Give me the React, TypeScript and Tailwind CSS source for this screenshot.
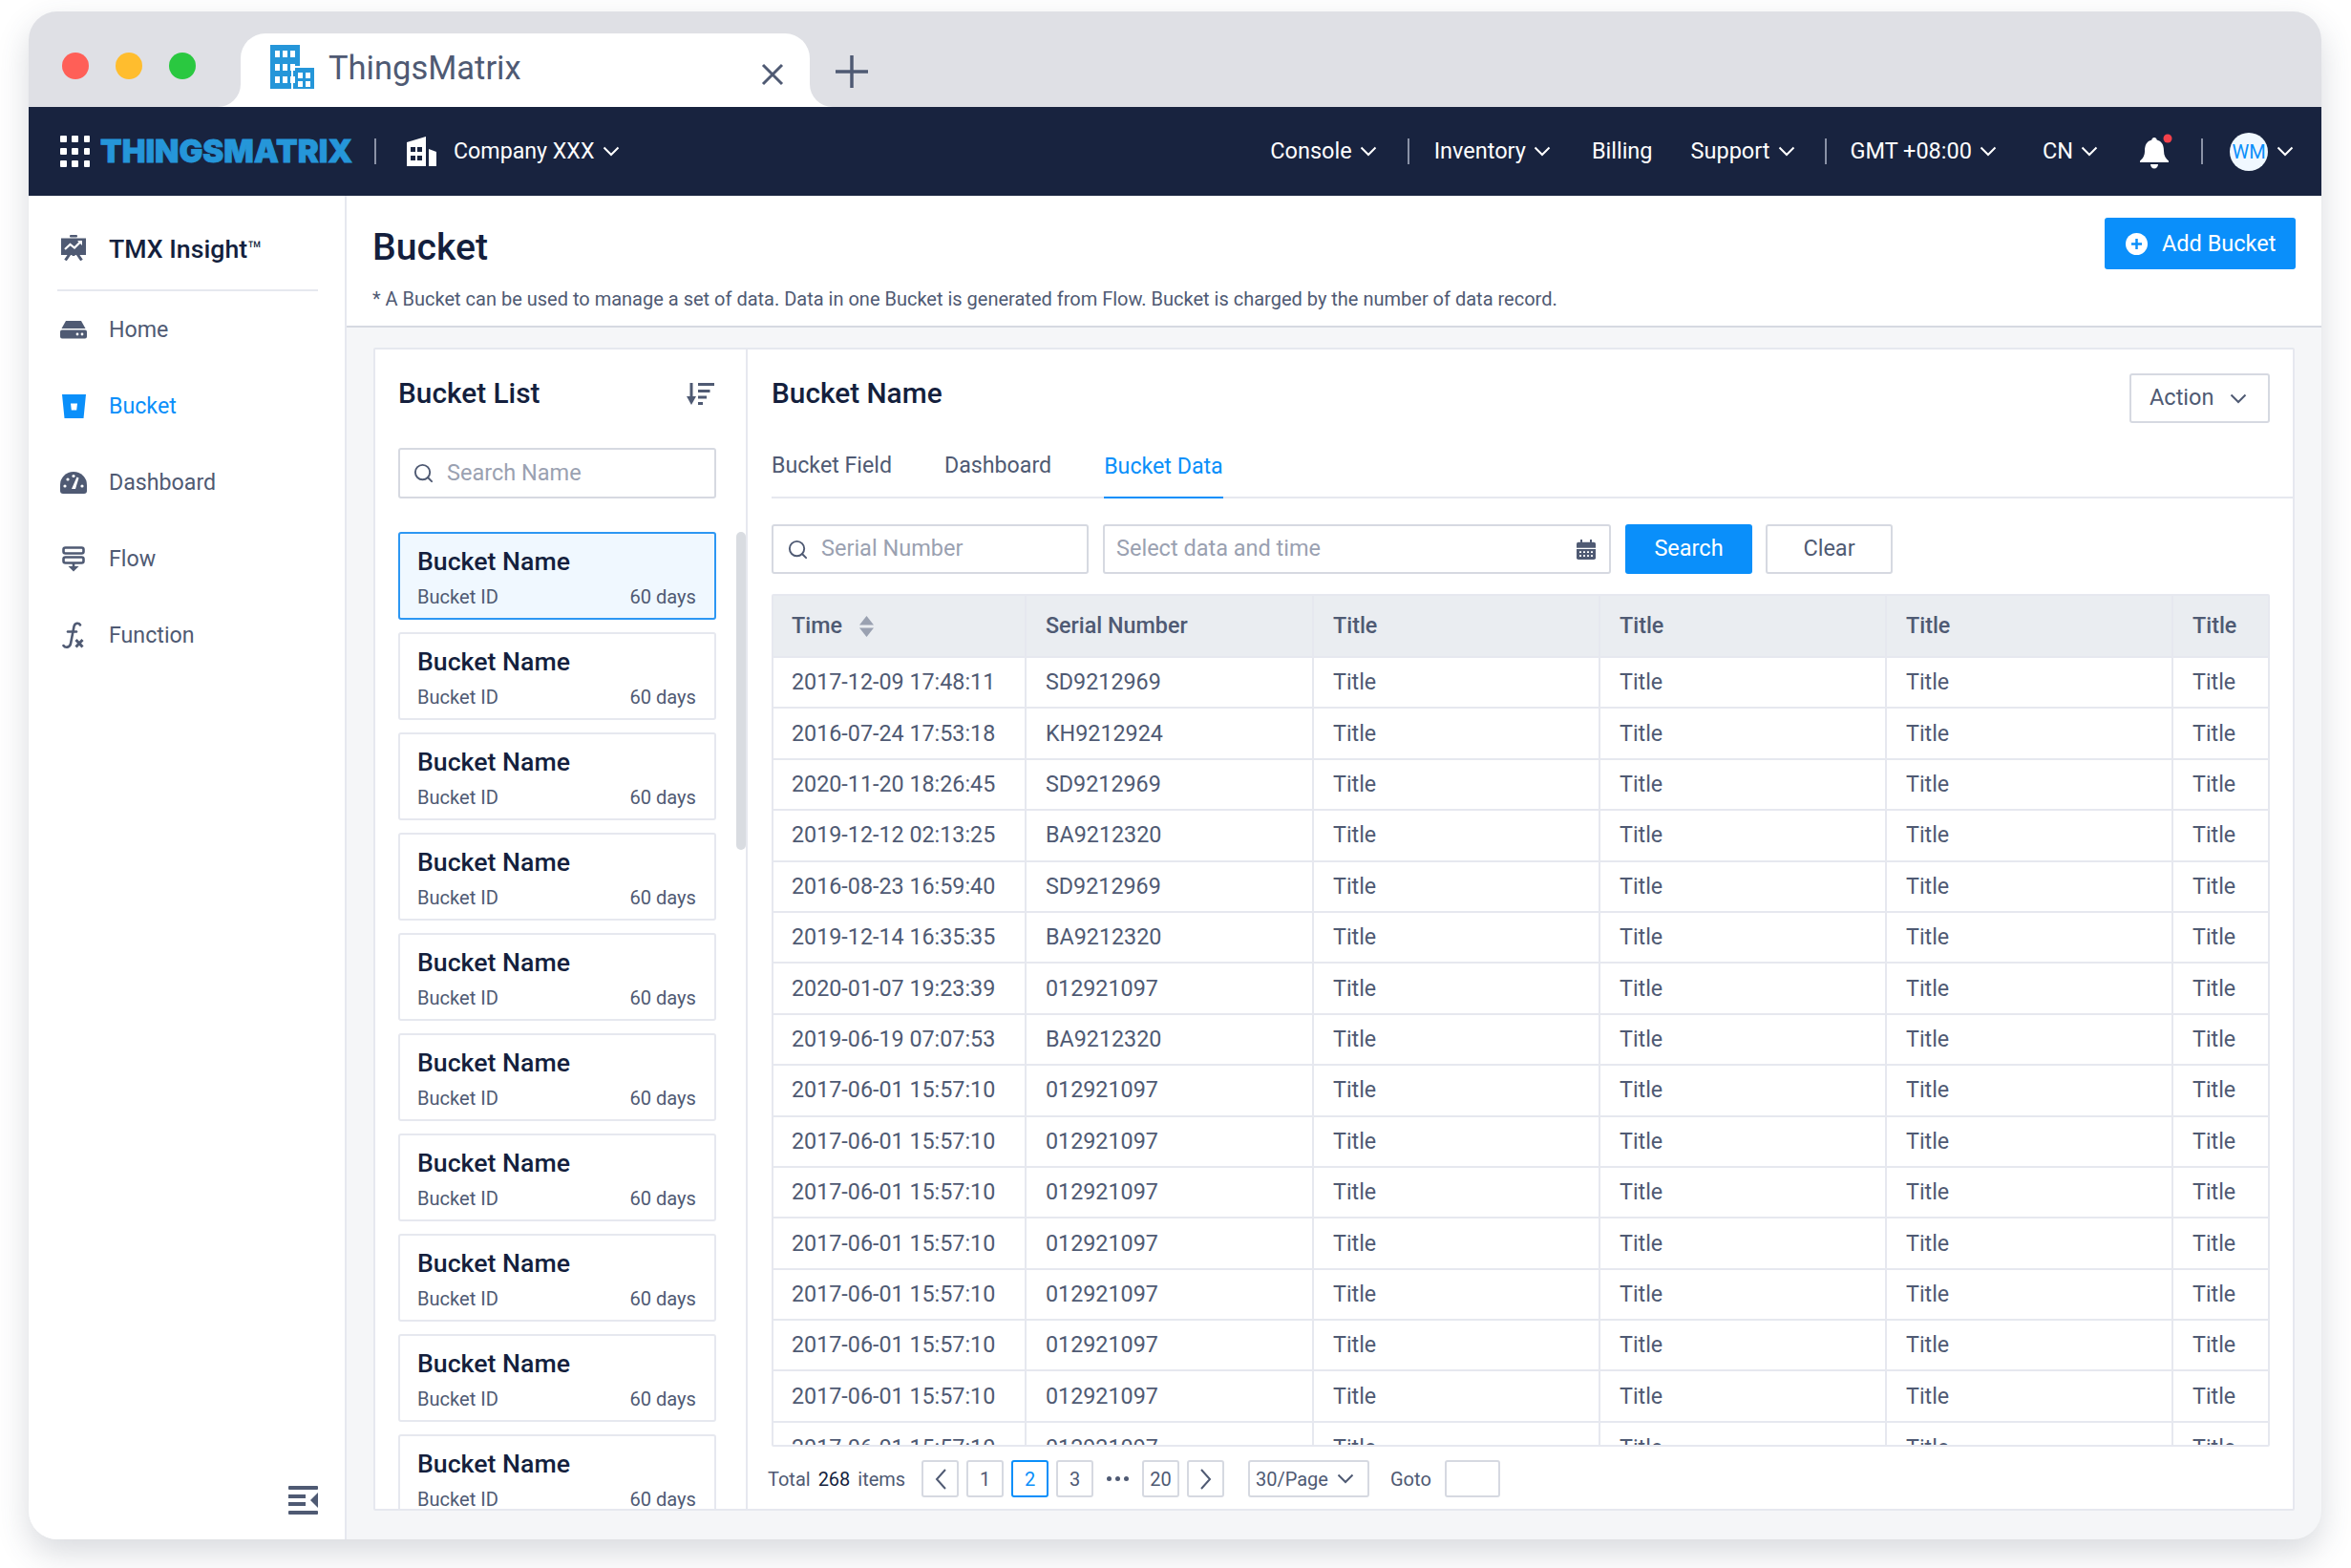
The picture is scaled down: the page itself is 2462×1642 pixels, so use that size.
import React from "react";
import { Search } from "lucide-react";

const Chev = ({ className = "text-white", w = 18 }: { className?: string; w?: number }) => (
  <svg width={w} height={(w * 11) / 18} viewBox="0 0 18 11" fill="none" className={className + " shrink-0"}>
    <path d="M1.5 1.5 9 9l7.5-7.5" stroke="currentColor" strokeWidth="2" />
  </svg>
);

const Divider = () => <div className="w-[2px] h-[27px] bg-[#8a92a6] shrink-0" />;

const Favicon = () => (
  <svg width="46" height="46" viewBox="0 0 46 46" className="shrink-0">
    <rect x="0" y="0" width="31" height="46" fill="#2596d9" />
    <rect x="22" y="22" width="24" height="24" fill="#fff" />
    <rect x="24" y="24" width="22" height="22" fill="#2596d9" />
    {[5, 13, 21].map((x) => [6, 20, 33].map((y) => <rect key={x + "-" + y} x={x} y={y} width="5" height="7" fill="#fff" />))}
    {[29, 37].map((x) => [29, 38].map((y) => <rect key={x + "-" + y} x={x} y={y} width="5" height="6" fill="#fff" />))}
  </svg>
);

const Grid = () => (
  <div className="grid grid-cols-3 gap-x-[6px] gap-y-[6px] w-[31px] shrink-0">
    {Array.from({ length: 9 }).map((_, i) => (
      <div key={i} className="w-[6.5px] h-[7px] bg-white rounded-[1px]" />
    ))}
  </div>
);

const CompanyIcon = () => (
  <svg width="31" height="31" viewBox="0 0 31 31" className="shrink-0" fill="#fff">
    <path d="M0 6 20 0v31H0z" />
    <path d="M23 13l8 3v15h-8z" />
    <g fill="#18233f">
      <rect x="4" y="11" width="5" height="5" />
      <rect x="11" y="11" width="5" height="5" />
      <rect x="4" y="20" width="5" height="5" />
      <rect x="11" y="20" width="5" height="5" />
    </g>
  </svg>
);

const Bell = () => (
  <svg width="36" height="38" viewBox="0 0 36 38" className="shrink-0">
    <path d="M16 4c1.5 0 2.5 1 2.7 2.5C24 8 26 12 26 18c0 5 2 8 5 10.5V30H1v-1.500C4 26 6 23 6 18c0-6 2-10 7.300-11.500C13.500 5 14.500 4 16 4z" fill="#fff" />
    <path d="M12 32h8c0 2.500-1.800 4.500-4 4.500S12 34.500 12 32z" fill="#fff" />
    <circle cx="30" cy="5" r="4.500" fill="#f5414b" />
  </svg>
);

const InsightIcon = () => (
  <svg width="26" height="27" viewBox="0 0 26 27" fill="#4f5a73">
    <rect x="9" y="0" width="8" height="2.500" rx="1" />
    <path d="M0 3.500h26v17.500H0z" />
    <path d="M4 15l5.500-5 4.500 3.500 7-7" stroke="#fff" strokeWidth="2.200" fill="none" />
    <path d="M17 6h5v5z" fill="#fff" />
    <path d="M9 20l-4.500 6.500M17 20l4.500 6.500" stroke="#4f5a73" strokeWidth="3" />
    <path d="M13 19v3" stroke="#4f5a73" strokeWidth="3" />
  </svg>
);

const HomeIcon = () => (
  <svg width="28" height="19" viewBox="0 0 28 19" fill="#4f5a73">
    <path d="M6 0h16l4.500 8H1.500z" />
    <path d="M2 9.500h24a2 2 0 0 1 2 2V16.500a2 2 0 0 1-2 2H2a2 2 0 0 1-2-2V11.500a2 2 0 0 1 2-2z" />
    <circle cx="18" cy="14" r="1.400" fill="#fff" />
    <circle cx="23" cy="14" r="1.400" fill="#fff" />
  </svg>
);

const BucketIcon = () => (
  <svg width="25" height="25" viewBox="0 0 25 25" fill="#0a8ffa">
    <path fillRule="evenodd" d="M0 0h25l-2.500 25H2.500zM9 9.500h7l-.8 7H9.800z" />
  </svg>
);

const GaugeIcon = () => (
  <svg width="28" height="23" viewBox="0 0 28 23">
    <path d="M14 0a14 14 0 0 1 14 14v6a3 3 0 0 1-3 3H3a3 3 0 0 1-3-3v-6A14 14 0 0 1 14 0z" fill="#4f5a73" />
    <g fill="#fff">
      <circle cx="5" cy="15" r="1.600" />
      <circle cx="8" cy="8" r="1.600" />
      <circle cx="14" cy="4.500" r="1.600" />
      <circle cx="23" cy="15" r="1.600" />
      <path d="M17.500 5.500 19.500 6.500 16 18h-4z" />
    </g>
  </svg>
);

const FlowIcon = () => (
  <svg width="24" height="27" viewBox="0 0 24 27" fill="none" stroke="#4f5a73" strokeWidth="2.600">
    <rect x="1.500" y="1.500" width="21" height="6" rx="2" />
    <rect x="1.500" y="11.500" width="21" height="6" rx="2" />
    <path d="M12 17.500v4" />
    <path d="M6.500 21h11L12 26.500z" fill="#4f5a73" stroke="none" />
  </svg>
);

const FuncIcon = () => (
  <svg width="24" height="29" viewBox="0 0 24 29" fill="none" stroke="#4f5a73" strokeWidth="2.600" strokeLinecap="round">
    <path d="M19 3.500C17.500 1 13.500 1 12.500 5L9 23c-.8 4-5.500 5-7.500 2" />
    <path d="M6 10.500h9" />
    <path d="M14.500 19l7 7.500M21.500 19l-7 7.500" strokeWidth="3" strokeLinecap="butt" />
  </svg>
);

const CollapseIcon = () => (
  <svg width="31" height="30" viewBox="0 0 31 30" fill="#4f5a73">
    <rect x="0" y="0" width="31" height="4" rx="1" />
    <rect x="0" y="9" width="18" height="4" />
    <rect x="0" y="17" width="18" height="4" />
    <rect x="0" y="26" width="31" height="4" rx="1" />
    <path d="M31 7v16l-8-8z" />
  </svg>
);

const SortIcon = () => (
  <svg width="29" height="23" viewBox="0 0 29 23" fill="#4f5a73">
    <rect x="3.500" y="0" width="3" height="16" />
    <path d="M0 14h10l-5 9z" />
    <rect x="12" y="0" width="17" height="3" />
    <rect x="12" y="7" width="12.500" height="3" />
    <rect x="12" y="13.500" width="9" height="3" />
    <rect x="12" y="20" width="5" height="3" />
  </svg>
);

const CalendarIcon = () => (
  <svg width="20" height="21" viewBox="0 0 20 24" preserveAspectRatio="none" fill="#4f5a73" className="shrink-0">
    <rect x="4" y="0" width="2" height="5" />
    <rect x="14" y="0" width="2" height="5" />
    <path d="M2 3h16a2 2 0 0 1 2 2v5H0V5a2 2 0 0 1 2-2z" />
    <path d="M0 11.500h20V22a2 2 0 0 1-2 2H2a2 2 0 0 1-2-2z" />
    <g fill="#fff">
      {[4, 8, 12, 16].map((x) => <rect key={x} x={x - 1} y="14" width="2" height="2" />)}
      {[4, 8, 12, 16].map((x) => <rect key={"b" + x} x={x - 1} y="18.500" width="2" height="2" />)}
    </g>
  </svg>
);

const NavItem = ({ icon, label, active }: { icon: React.ReactNode; label: string; active?: boolean }) => (
  <div className="h-[80px] flex items-center pl-[33px]">
    <div className="w-[28px] flex justify-center shrink-0">{icon}</div>
    <span className={"ml-[23px] text-[23.2px] " + (active ? "text-[#0a8ffa]" : "text-[#4f5a73]")}>{label}</span>
  </div>
);

const Card = ({ active }: { active?: boolean }) => (
  <div
    className={
      "h-[92px] shrink-0 rounded-[3px] border-2 pl-[18px] pr-[19px] pt-[11px] " +
      (active ? "border-[#2d97f3] bg-[#f0f8ff]" : "border-[#e6e8ef] bg-white")
    }
  >
    <div className="text-[26.7px] font-medium leading-[36px] text-[#141f3d]">Bucket Name</div>
    <div className="flex justify-between text-[20.1px] leading-[28px] mt-[5px] text-[#4f5a73]">
      <span>Bucket ID</span>
      <span>60 days</span>
    </div>
  </div>
);

const rows: [string, string][] = [
  ["2017-12-09 17:48:11", "SD9212969"],
  ["2016-07-24 17:53:18", "KH9212924"],
  ["2020-11-20 18:26:45", "SD9212969"],
  ["2019-12-12 02:13:25", "BA9212320"],
  ["2016-08-23 16:59:40", "SD9212969"],
  ["2019-12-14 16:35:35", "BA9212320"],
  ["2020-01-07 19:23:39", "012921097"],
  ["2019-06-19 07:07:53", "BA9212320"],
  ["2017-06-01 15:57:10", "012921097"],
  ["2017-06-01 15:57:10", "012921097"],
  ["2017-06-01 15:57:10", "012921097"],
  ["2017-06-01 15:57:10", "012921097"],
  ["2017-06-01 15:57:10", "012921097"],
  ["2017-06-01 15:57:10", "012921097"],
  ["2017-06-01 15:57:10", "012921097"],
  ["2017-06-01 15:57:10", "012921097"],
];

const PageBtn = ({ children, active }: { children: React.ReactNode; active?: boolean }) => (
  <div
    className={
      "w-[39px] h-[39px] flex items-center justify-center rounded-[3px] border-2 text-[20px] shrink-0 " +
      (active ? "border-[#0a8ffa] text-[#0a8ffa]" : "border-[#d6d9e1] text-[#4f5a73]")
    }
  >
    {children}
  </div>
);

export default function App() {
  return (
    <div className="w-[2462px] h-[1642px] bg-white pt-[12px] pl-[30px] font-[Roboto,sans-serif] overflow-hidden">
      <div className="w-[2401px] h-[1600px] rounded-t-[30px] rounded-b-[30px] overflow-hidden flex flex-col shadow-[0_14px_34px_rgba(60,70,90,0.2)] bg-[#f5f6f8]">
        {/* browser chrome */}
        <div className="h-[100px] bg-[#dfe0e5] flex items-end shrink-0">
          <div className="flex items-center gap-[29px] h-[100px] pl-[35px] w-[222px] pt-[14px]">
            <div className="w-[28px] h-[28px] rounded-full bg-[#ff5f57] shrink-0" />
            <div className="w-[28px] h-[28px] rounded-full bg-[#ffbd2e] shrink-0 ml-[-1px]" />
            <div className="w-[28px] h-[28px] rounded-full bg-[#2ac840] shrink-0 ml-[-1px]" />
          </div>
          <div className="relative w-[596px] h-[77px] bg-white rounded-t-[26px] flex items-center pl-[31px] pr-[27px] pb-[8px]">
            <div className="absolute left-[-24px] bottom-0 w-[24px] h-[24px] bg-white">
              <div className="w-full h-full bg-[#dfe0e5] rounded-br-[24px]" />
            </div>
            <div className="absolute right-[-24px] bottom-0 w-[24px] h-[24px] bg-white">
              <div className="w-full h-full bg-[#dfe0e5] rounded-bl-[24px]" />
            </div>
            <Favicon />
            <span className="ml-[15px] mt-[5px] text-[34.5px] text-[#4f5a73]">ThingsMatrix</span>
            <svg width="24" height="24" viewBox="0 0 24 24" className="ml-auto mt-[16px]" stroke="#4f5a73" strokeWidth="3">
              <path d="M2 2l20 20M22 2 2 22" />
            </svg>
          </div>
          <svg width="36" height="36" viewBox="0 0 36 36" className="ml-[26px] mb-[19px]" stroke="#4f5a73" strokeWidth="3.500">
            <path d="M18 1v34M1 18h34" />
          </svg>
        </div>

        {/* top nav */}
        <div className="h-[93px] shrink-0 bg-[#18233f] flex items-center pl-[33px] pr-[29px] text-white text-[23.5px]">
          <Grid />
          <span className="ml-[11px] text-[33px] font-black leading-none text-[#2596d9] [-webkit-text-stroke:0.8px_#2596d9] font-[Inter,sans-serif] w-[263px] whitespace-nowrap">THINGSMATRIX</span>
          <div className="ml-[24px]"><Divider /></div>
          <div className="ml-[32px]"><CompanyIcon /></div>
          <span className="ml-[18px] text-[23.2px]">Company XXX</span>
          <div className="ml-[9px]"><Chev /></div>

          <div className="ml-auto flex items-center">
            <span>Console</span>
            <div className="ml-[8px]"><Chev /></div>
            <div className="ml-[32px]"><Divider /></div>
            <span className="ml-[26px]">Inventory</span>
            <div className="ml-[8px]"><Chev /></div>
            <span className="ml-[43px]">Billing</span>
            <span className="ml-[40px]">Support</span>
            <div className="ml-[8px]"><Chev /></div>
            <div className="ml-[31px]"><Divider /></div>
            <span className="ml-[25px]">GMT +08:00</span>
            <div className="ml-[8px]"><Chev /></div>
            <span className="ml-[48px]">CN</span>
            <div className="ml-[8px]"><Chev /></div>
            <div className="ml-[43px]"><Bell /></div>
            <div className="ml-[29px]"><Divider /></div>
            <div className="ml-[28px] w-[40px] h-[40px] rounded-full bg-[#f0f8ff] text-[#0a8ffa] text-[20px] flex items-center justify-center">WM</div>
            <div className="ml-[9px]"><Chev /></div>
          </div>
        </div>

        <div className="flex-1 flex min-h-0">
          {/* sidebar */}
          <aside className="w-[333px] shrink-0 bg-white border-r-2 border-[#e6e8ef] flex flex-col">
            <div className="h-[100px] ml-[30px] mr-[28px] border-b-2 border-[#e6e8ef] flex items-center pt-[11px]">
              <div className="ml-[3px] w-[28px] flex justify-center shrink-0"><InsightIcon /></div>
              <span className="ml-[23px] mt-[3px] text-[26.7px] font-medium text-[#141f3d]">TMX Insight<span className="text-[25px] font-normal">™</span></span>
            </div>
            <NavItem icon={<HomeIcon />} label="Home" />
            <NavItem icon={<BucketIcon />} label="Bucket" active />
            <NavItem icon={<GaugeIcon />} label="Dashboard" />
            <NavItem icon={<FlowIcon />} label="Flow" />
            <NavItem icon={<FuncIcon />} label="Function" />
            <div className="mt-auto self-end mr-[28px] mb-[26px]"><CollapseIcon /></div>
          </aside>

          {/* main */}
          <main className="flex-1 min-w-0 flex flex-col">
            <div className="h-[138px] shrink-0 bg-white border-b-2 border-[#d6d9e1] pl-[27px] pr-[27px]">
              <div className="flex justify-between">
                <h1 className="mt-[32px] text-[39.2px] leading-[44px] font-medium text-[#141f3d]">Bucket</h1>
                <div className="mt-[23px] w-[200px] h-[54px] bg-[#0a8ffa] rounded-[3px] flex items-center pl-[22px] text-white text-[23.5px]">
                  <svg width="23" height="23" viewBox="0 0 23 23" className="shrink-0">
                    <circle cx="11.500" cy="11.500" r="11.500" fill="#fff" />
                    <path d="M11.500 6v11M6 11.500h11" stroke="#0a8ffa" strokeWidth="2.500" />
                  </svg>
                  <span className="ml-[15px] mt-[1px]">Add Bucket</span>
                </div>
              </div>
              <p className="mt-[17px] text-[20px] leading-[28px] text-[#4f5a73]">* A Bucket can be used to manage a set of data. Data in one Bucket is generated from Flow. Bucket is charged by the number of data record.</p>
            </div>

            <div className="flex-1 min-h-0 pl-[28px] pr-[28px] pt-[21px] pb-[30px]">
              <div className="h-full flex bg-white border-2 border-[#e6e8ef] rounded-[2px] overflow-hidden">
                {/* bucket list */}
                <section className="w-[390px] shrink-0 border-r-2 border-[#e6e8ef] pl-[24px] pr-[31px] pt-[25px] relative flex flex-col overflow-hidden">
                  <div className="flex items-center justify-between h-[42px] shrink-0">
                    <h2 className="text-[29.8px] font-medium text-[#141f3d]">Bucket List</h2>
                    <div className="mr-[2px]"><SortIcon /></div>
                  </div>
                  <div className="mt-[36px] h-[53px] shrink-0 border-2 border-[#d6d9e1] rounded-[3px] flex items-center pl-[13px]">
                    <Search size={23} strokeWidth={2} className="text-[#4f5a73]" />
                    <span className="ml-[13px] text-[23.5px] text-[#9aa1b1]">Search Name</span>
                  </div>
                  <div className="mt-[35px] flex flex-col gap-[13px]">
                    {Array.from({ length: 10 }).map((_, i) => <Card key={i} active={i === 0} />)}
                  </div>
                  <div className="absolute right-0 top-[191px] w-[10px] h-[333px] rounded-[5px] bg-[#d9dce1]" />
                </section>

                {/* detail */}
                <section className="flex-1 min-w-0 pl-[25px] flex flex-col">
                  <div className="pr-[24px] pt-[25px] flex justify-between h-[77px] shrink-0">
                    <h2 className="text-[29.8px] leading-[42px] font-medium text-[#141f3d]">Bucket Name</h2>
                    <div className="w-[147px] h-[52px] border-2 border-[#d6d9e1] rounded-[3px] flex items-center pl-[19px] text-[23.5px] text-[#4f5a73]">
                      <span>Action</span>
                      <div className="ml-[17px]"><Chev className="text-[#4f5a73]" /></div>
                    </div>
                  </div>
                  <div className="h-[79px] shrink-0 flex items-end gap-[55px] border-b-2 border-[#e6e8ef] text-[23.2px] text-[#4f5a73]">
                    <div className="h-[69px] pt-[4px] flex items-center">Bucket Field</div>
                    <div className="h-[69px] pt-[4px] flex items-center">Dashboard</div>
                    <div className="h-[69px] pt-[4px] flex items-center text-[#0a8ffa] border-b-2 border-[#0a8ffa] mb-[-2px]">Bucket Data</div>
                  </div>

                  <div className="mt-[27px] pr-[24px] h-[52px] shrink-0 flex text-[23.5px]">
                    <div className="w-[332px] border-2 border-[#d6d9e1] rounded-[3px] flex items-center pl-[14px]">
                      <Search size={23} strokeWidth={2} className="text-[#4f5a73]" />
                      <span className="ml-[13px] text-[#9aa1b1]">Serial Number</span>
                    </div>
                    <div className="ml-[15px] w-[532px] border-2 border-[#d6d9e1] rounded-[3px] flex items-center pl-[12px] pr-[14px] justify-between">
                      <span className="text-[#9aa1b1]">Select data and time</span>
                      <CalendarIcon />
                    </div>
                    <div className="ml-[15px] w-[133px] bg-[#0a8ffa] rounded-[3px] text-white flex items-center justify-center">Search</div>
                    <div className="ml-[14px] w-[133px] border-2 border-[#d6d9e1] rounded-[3px] text-[#4f5a73] flex items-center justify-center">Clear</div>
                  </div>

                  <div className="mt-[21px] mr-[24px] h-[893px] shrink-0 overflow-hidden border-2 border-[#e6e8ef] rounded-[2px]">
                    <table className="w-full table-fixed border-collapse text-[23.3px] text-[#4f5a73]">
                      <colgroup>
                        <col className="w-[264px]" />
                        <col className="w-[301px]" />
                        <col className="w-[300px]" />
                        <col className="w-[300px]" />
                        <col className="w-[300px]" />
                        <col />
                      </colgroup>
                      <thead>
                        <tr className="h-[64px] bg-[#eaedf1]">
                          <th className="font-medium text-left pl-[19px] border-r-2 border-[#e6e8ef]">
                            <div className="flex items-center">
                              <span>Time</span>
                              <svg width="17" height="22" viewBox="0 0 17 22" className="ml-[17px]" fill="#9aa1b1">
                                <path d="M8.500 0 16 9.500H1z" />
                                <path d="M8.500 22 1 12.500h15z" />
                              </svg>
                            </div>
                          </th>
                          <th className="font-medium text-left pl-[20px] border-r-2 border-[#e6e8ef]">Serial Number</th>
                          <th className="font-medium text-left pl-[20px] border-r-2 border-[#e6e8ef]">Title</th>
                          <th className="font-medium text-left pl-[20px] border-r-2 border-[#e6e8ef]">Title</th>
                          <th className="font-medium text-left pl-[20px] border-r-2 border-[#e6e8ef]">Title</th>
                          <th className="font-medium text-left pl-[20px]">Title</th>
                        </tr>
                      </thead>
                      <tbody>
                        {rows.map((r, i) => (
                          <tr key={i} className="h-[53.4px] border-t-2 border-[#e6e8ef]">
                            <td className="pl-[19px] border-r-2 border-[#e6e8ef]">{r[0]}</td>
                            <td className="pl-[20px] border-r-2 border-[#e6e8ef]">{r[1]}</td>
                            <td className="pl-[20px] border-r-2 border-[#e6e8ef]">Title</td>
                            <td className="pl-[20px] border-r-2 border-[#e6e8ef]">Title</td>
                            <td className="pl-[20px] border-r-2 border-[#e6e8ef]">Title</td>
                            <td className="pl-[20px]">Title</td>
                          </tr>
                        ))}
                      </tbody>
                    </table>
                  </div>

                  <div className="mt-[14px] ml-[-4px] flex items-center h-[39px] text-[20px] text-[#4f5a73]">
                    <span className="w-[161px] shrink-0 whitespace-nowrap">Total <span className="text-[#141f3d] mx-[3px]">268</span> items</span>
                    <div className="flex items-center gap-[8px]">
                      <PageBtn>
                        <svg width="12" height="22" viewBox="0 0 12 22" fill="none" stroke="currentColor" strokeWidth="2"><path d="M11 1 2 11l9 10" /></svg>
                      </PageBtn>
                      <PageBtn>1</PageBtn>
                      <PageBtn active>2</PageBtn>
                      <PageBtn>3</PageBtn>
                      <div className="w-[23px] mx-[6px] flex justify-between shrink-0">
                        <div className="w-[5px] h-[5px] rounded-full bg-[#4f5a73]" />
                        <div className="w-[5px] h-[5px] rounded-full bg-[#4f5a73]" />
                        <div className="w-[5px] h-[5px] rounded-full bg-[#4f5a73]" />
                      </div>
                      <PageBtn>20</PageBtn>
                      <PageBtn>
                        <svg width="12" height="22" viewBox="0 0 12 22" fill="none" stroke="currentColor" strokeWidth="2"><path d="m1 1 9 10-9 10" /></svg>
                      </PageBtn>
                    </div>
                    <div className="ml-[25px] w-[127px] h-[39px] border-2 border-[#d6d9e1] rounded-[3px] flex items-center pl-[6px] shrink-0">
                      <span>30/Page</span>
                      <div className="ml-[9px]"><Chev className="text-[#4f5a73]" /></div>
                    </div>
                    <span className="ml-[22px] w-[57px] shrink-0">Goto</span>
                    <div className="w-[58px] h-[39px] border-2 border-[#d6d9e1] rounded-[3px]" />
                  </div>
                </section>
              </div>
            </div>
          </main>
        </div>
      </div>
    </div>
  );
}
